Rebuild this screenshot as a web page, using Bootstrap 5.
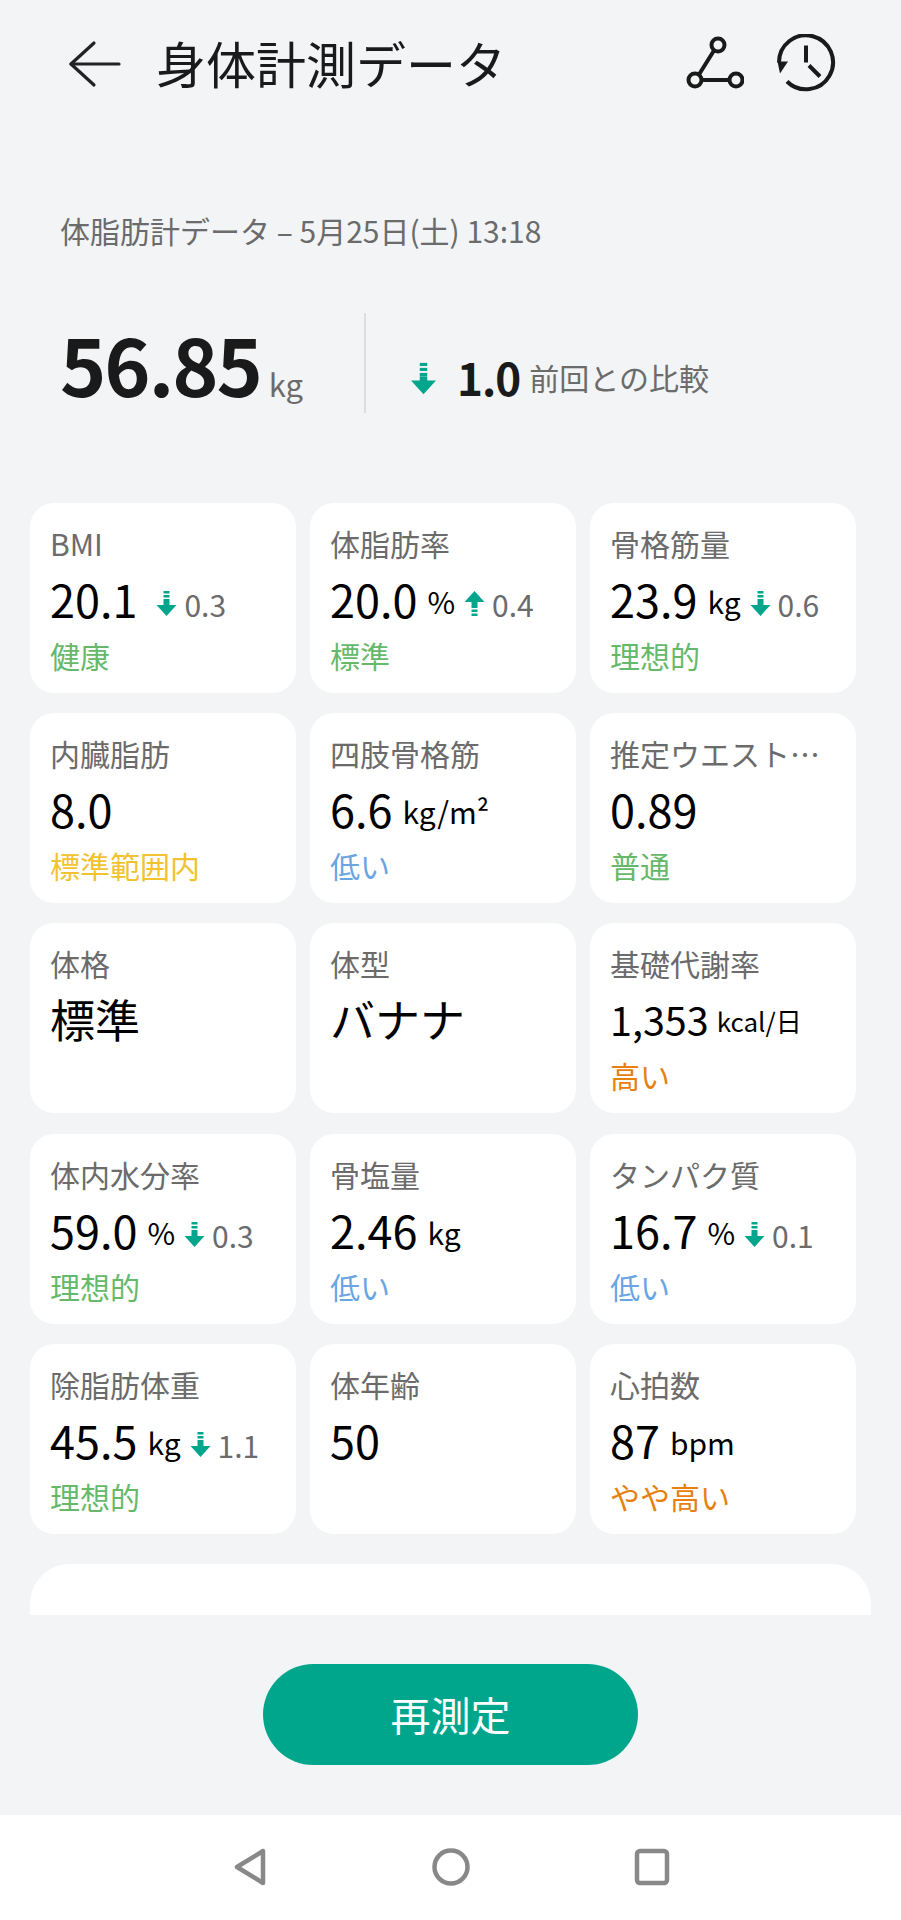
<!DOCTYPE html>
<html lang="ja">
<head>
    <meta charset="UTF-8">
    <meta name="viewport" content="width=device-width, initial-scale=1.0">
    <title>身体計測データ</title>
    <link rel="stylesheet" href="https://cdn.jsdelivr.net/npm/bootstrap@5.3.0/dist/css/bootstrap.min.css">
    <style>
        body { background: #f2f4f6; font-family: "Noto Sans CJK JP", "Noto Sans", sans-serif; color: #1a1a1a; }
        .screen { width: 901px; height: 1920px; }
        .top-bar { height: 128px; padding-left: 68px; padding-right: 65px; }
        .page-title { font-size: 50px; font-weight: 400; margin: 0 0 0 34px; line-height: 1; position: relative; top: -2px; }
        .top-icons { gap: 32px; }
        .sub-line { font-size: 30px; color: #6b6b6b; padding: 82px 0 0 60px; line-height: 40px; }
        .weight-row { height: 100px; margin: 63px 0 0 60px; }
        .weight-main { width: 304px; font-size: 78.5px; font-weight: 700; letter-spacing: -2px; line-height: 100px; }
        .weight-unit { font-size: 31px; font-weight: 400; color: #6b6b6b; letter-spacing: 0; margin-left: 8px; }
        .weight-delta { border-left: 2px solid #dcdddf; padding-left: 45px; height: 100px; padding-top: 28px; }
        .delta-arrow { position: relative; top: 1px; }
        .delta-num { font-size: 44px; font-weight: 700; margin-left: 21px; letter-spacing: -1px; line-height: 1; }
        .delta-text { font-size: 30px; color: #6b6b6b; margin-left: 9px; }
        .metric-grid { display: grid; grid-template-columns: repeat(3, 265.5px); column-gap: 14.5px; row-gap: 20.2px; margin: 90px 0 0 30px; }
        .metric-card { height: 190px; border: 0; border-radius: 24px; padding: 18px 8px 0 20px; }
        .metric-label { font-size: 30px; line-height: 44px; color: #6b6b6b; white-space: nowrap; }
        .metric-value { height: 69px; line-height: 68px; white-space: nowrap; color: #000; }
        .val-num { font-size: 45px; }
        .val-num-sm { font-size: 39.5px; }
        .val-unit { font-size: 30px; margin-left: 10px; position: relative; top: -4px; }
        .val-unit-sm { font-size: 26px; margin-left: 8px; }
        .val-arrow { margin-left: 9px; vertical-align: 2px; }
        .val-arrow-wide { margin-left: 19px; }
        .val-diff { font-size: 30px; color: #6b6b6b; margin-left: 7px; position: relative; top: -1px; }
        .metric-status { font-size: 30px; line-height: 42px; }
        .st-good { color: #66b96a; }
        .st-mid { color: #f2c230; }
        .st-low { color: #6aa5e2; }
        .st-high { color: #e8800f; }
        .more-card { height: 51px; width: 841px; margin: 30px 0 0 30px; background: #fff; border-radius: 40px 40px 0 0; }
        .remeasure { width: 375px; height: 101px; margin-top: 49px; font-size: 40px; color: #fff; background: #00a68c; border: 0; line-height: 1; }
        .sys-nav { height: 105px; margin-top: 50px; background: #fff; }
        .sys-nav svg { display: block; }
        .sys-gap { gap: 163px; }
    </style>
</head>
<body>

<div class="screen d-flex flex-column">

    <!-- Header -->
    <div class="top-bar d-flex align-items-center justify-content-between">
        <div class="d-flex align-items-center">
            <svg width="54" height="48" viewBox="0 0 54 48" fill="none" stroke="#222" stroke-width="3.2" stroke-linecap="round" stroke-linejoin="round">
                <path d="M26 3 L3 24 L26 45"/><path d="M3 24 H51"/>
            </svg>
            <h1 class="page-title">身体計測データ</h1>
        </div>
        <div class="top-icons d-flex align-items-center">
            <svg width="60" height="56" viewBox="0 0 60 56" fill="none" stroke="#1a1a1a" stroke-width="4">
                <circle cx="34" cy="9" r="6.5"/><circle cx="11" cy="44" r="6.5"/><circle cx="52" cy="44" r="6.5"/>
                <path d="M30 14.500 L15 38.500"/><path d="M17.500 44 H45.500"/>
            </svg>
            <svg width="60" height="60" viewBox="0 1.500 60 60" fill="none" stroke="#1a1a1a" stroke-width="4">
                <path d="M3 30 A27 27 0 1 1 11 49"/>
                <path d="M1.500 29 L12 29 L4 41 Z" fill="#1a1a1a" stroke="none"/>
                <path d="M30 13 V30"/><path d="M33 33 L44 44"/>
            </svg>
        </div>
    </div>

    <div class="sub-line">体脂肪計データ – 5月25日(土) 13:18</div>

    <div class="weight-row d-flex">
        <div class="weight-main">56.85<span class="weight-unit">kg</span></div>
        <div class="weight-delta d-flex align-items-center">
            <svg class="delta-arrow" width="25" height="33" viewBox="0 0 20 25" fill="#00a68c"><rect x="7" y="0" width="6" height="2.500"/><rect x="7" y="4" width="6" height="2.500"/><rect x="7" y="8" width="6" height="3"/><path d="M7 11 H13 V14 H20 L10 25 L0 14 H7 Z"/></svg>
            <span class="delta-num">1.0</span>
            <span class="delta-text">前回との比較</span>
        </div>
    </div>

    <!-- Metric cards -->
    <div class="metric-grid" id="metricGrid"></div>

    <div class="more-card"></div>

    <div class="d-flex justify-content-center">
        <button type="button" class="btn rounded-pill remeasure">再測定</button>
    </div>

    <!-- Android nav -->
    <div class="sys-nav d-flex align-items-center justify-content-center sys-gap">
        <svg width="36" height="40" viewBox="0 0 36 40" fill="none" stroke="#888" stroke-width="4.500" stroke-linejoin="round"><path d="M31 4 V36 L5 20 Z"/></svg>
        <svg width="40" height="40" viewBox="0 0 40 40" fill="none" stroke="#888" stroke-width="4.500"><circle cx="20" cy="20" r="16.500"/></svg>
        <svg width="36" height="38" viewBox="0 0 36 38" fill="none" stroke="#888" stroke-width="4.500" stroke-linejoin="round"><rect x="3" y="3" width="30" height="32" rx="3"/></svg>
    </div>
</div>

<script>
    const arrowDown = cls => `<svg class="val-arrow ${cls}" width="21" height="25" viewBox="0 0 20 25" fill="#00a68c"><rect x="7" y="0" width="6" height="2.500"/><rect x="7" y="4" width="6" height="2.500"/><rect x="7" y="8" width="6" height="3"/><path d="M7 11 H13 V14 H20 L10 25 L0 14 H7 Z"/></svg>`;
    const arrowUp = cls => `<svg class="val-arrow ${cls}" width="21" height="25" viewBox="0 0 20 25" fill="#00a68c"><path d="M7 14 H13 V11 H20 L10 0 L0 11 H7 Z"/><rect x="7" y="14" width="6" height="3"/><rect x="7" y="18.500" width="6" height="2.500"/><rect x="7" y="22.500" width="6" height="2.500"/></svg>`;

    const metrics = [
        { label: "BMI", num: "20.1", diff: "0.3", dir: "down", status: "健康", cls: "st-good" },
        { label: "体脂肪率", num: "20.0", unit: "%", diff: "0.4", dir: "up", status: "標準", cls: "st-good" },
        { label: "骨格筋量", num: "23.9", unit: "kg", diff: "0.6", dir: "down", status: "理想的", cls: "st-good" },
        { label: "内臓脂肪", num: "8.0", status: "標準範囲内", cls: "st-mid" },
        { label: "四肢骨格筋", num: "6.6", unit: "kg/m²", status: "低い", cls: "st-low" },
        { label: "推定ウエスト…", num: "0.89", status: "普通", cls: "st-good" },
        { label: "体格", num: "標準" },
        { label: "体型", num: "バナナ" },
        { label: "基礎代謝率", num: "1,353", unit: "kcal/日", small: true, status: "高い", cls: "st-high" },
        { label: "体内水分率", num: "59.0", unit: "%", diff: "0.3", dir: "down", status: "理想的", cls: "st-good" },
        { label: "骨塩量", num: "2.46", unit: "kg", status: "低い", cls: "st-low" },
        { label: "タンパク質", num: "16.7", unit: "%", diff: "0.1", dir: "down", status: "低い", cls: "st-low" },
        { label: "除脂肪体重", num: "45.5", unit: "kg", diff: "1.1", dir: "down", status: "理想的", cls: "st-good" },
        { label: "体年齢", num: "50" },
        { label: "心拍数", num: "87", unit: "bpm", status: "やや高い", cls: "st-high" }
    ];

    const grid = document.getElementById("metricGrid");
    metrics.forEach(m => {
        let value = `<span class="val-num ${m.small ? "val-num-sm" : ""}">${m.num}</span>`;
        if (m.unit) value += `<span class="val-unit ${m.small ? "val-unit-sm" : ""}">${m.unit}</span>`;
        if (m.diff) {
            const arrowCls = m.unit ? "" : "val-arrow-wide";
            value += (m.dir === "up" ? arrowUp(arrowCls) : arrowDown(arrowCls)) + `<span class="val-diff">${m.diff}</span>`;
        }
        grid.innerHTML += `
            <div class="card metric-card">
                <div class="metric-label">${m.label}</div>
                <div class="metric-value">${value}</div>
                <div class="metric-status ${m.cls || ""}">${m.status || ""}</div>
            </div>`;
    });
</script>
<script src="https://cdn.jsdelivr.net/npm/bootstrap@5.3.0/dist/js/bootstrap.bundle.min.js"></script>
</body>
</html>
